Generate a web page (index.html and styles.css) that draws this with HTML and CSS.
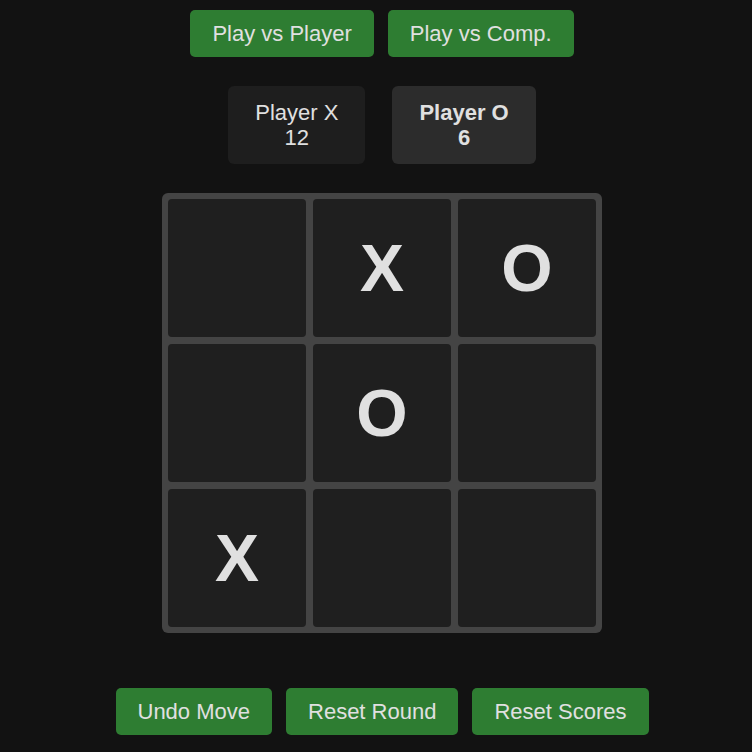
FILE: index.html
```html
<!DOCTYPE html>
<html lang="en">
<head>
<meta charset="utf-8">
<title>Tic Tac Toe</title>
<link rel="stylesheet" href="styles.css">
</head>
<body>
<main class="app">
  <div class="modes">
    <button class="btn">Play vs Player</button>
    <button class="btn">Play vs Comp.</button>
  </div>
  <div class="scores">
    <div class="score">
      <div>Player X</div>
      <div>12</div>
    </div>
    <div class="score active">
      <div>Player O</div>
      <div>6</div>
    </div>
  </div>
  <div class="board">
    <div class="cell"></div>
    <div class="cell">X</div>
    <div class="cell">O</div>
    <div class="cell"></div>
    <div class="cell">O</div>
    <div class="cell"></div>
    <div class="cell">X</div>
    <div class="cell"></div>
    <div class="cell"></div>
  </div>
  <div class="controls">
    <button class="btn">Undo Move</button>
    <button class="btn">Reset Round</button>
    <button class="btn">Reset Scores</button>
  </div>
</main>
</body>
</html>
```
FILE: styles.css
```css
html, body {
  margin: 0;
  background: #121212;
}
body {
  padding-left: 12px;
  font-family: "Liberation Sans", Arial, sans-serif;
  color: #e0e0e0;
}
.app {
  display: flex;
  flex-direction: column;
  align-items: center;
  padding-top: 10px;
}
.modes, .controls {
  display: flex;
  gap: 14px;
}
.btn {
  background: #2e7d32;
  color: #e0e0e0;
  border: none;
  border-radius: 5px;
  font-family: "Liberation Sans", Arial, sans-serif;
  font-size: 22px;
  line-height: 25px;
  padding: 11px 22px;
}
.scores {
  display: flex;
  gap: 27px;
  margin-top: 29px;
}
.score {
  background: #1e1e1e;
  border-radius: 6px;
  padding: 14px 27px;
  font-size: 22px;
  line-height: 25px;
  text-align: center;
}
.score.active {
  background: #2c2c2c;
  font-weight: bold;
}
.board {
  margin-top: 29px;
  display: grid;
  grid-template-columns: repeat(3, 138px);
  grid-template-rows: repeat(3, 138px);
  gap: 7px;
  padding: 6px;
  background: #444444;
  border-radius: 6px;
}
.cell {
  background: #1f1f1f;
  border-radius: 4px;
  display: flex;
  align-items: center;
  justify-content: center;
  font-size: 66px;
  font-weight: bold;
  color: #e0e0e0;
}
.controls {
  margin-top: 55px;
}
```
